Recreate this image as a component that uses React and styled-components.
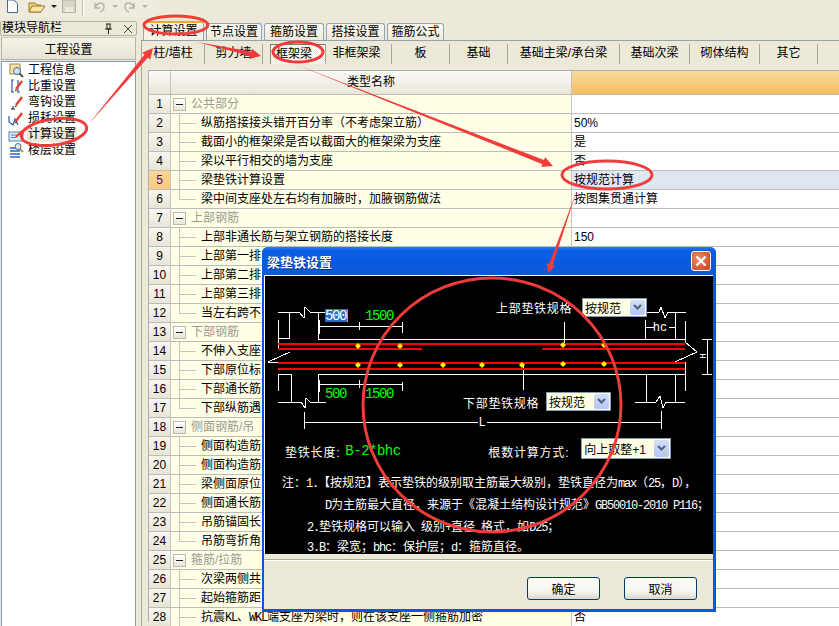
import React from 'react'
import styled, { createGlobalStyle } from 'styled-components'

const FONT = '"Liberation Sans", "Noto Sans CJK SC", sans-serif'
const RED = '#f23c3c'

const GlobalStyle = createGlobalStyle`
  html, body { margin: 0; padding: 0; background: #ece9d8; }
  body { font: 12px ${FONT}; color: #000; }
`

const Page = styled.div`
  position: relative;
  width: 839px;
  height: 626px;
  overflow: hidden;
  background: #ece9d8;
  display: flex;
  flex-direction: column;
`

const Toolbar = styled.div`
  height: 17px;
  flex: none;
  width: 160px;
  display: flex;
  align-items: flex-start;
  background: #efecdf;
  border-bottom-right-radius: 3px;
  padding-left: 6px;
  box-sizing: border-box;
`

const ToolIcon = styled.svg`
  flex: none;
  margin-right: ${({ $gap }) => $gap || 0}px;
`

const Body = styled.div`
  flex: 1;
  min-height: 0;
  display: flex;
  padding-top: 4px;
`

const Side = styled.div`
  width: 138px;
  flex: none;
  display: flex;
  flex-direction: column;
`

const SideHead = styled.div`
  height: 13px;
  margin-right: 1px;
  border: 1px solid #b5b2a4;
  border-radius: 2px;
  display: flex;
  align-items: center;
  padding-left: 1px;
  font-size: 12px;
  line-height: 13px;
`

const SideTitle = styled.span`
  flex: 1;
`

const SideBtn = styled.button`
  height: 23px;
  margin: 1px 2px 0 1px;
  padding: 0;
  border: 1px solid #b8b5a6;
  border-top-color: #cfccbc;
  background: linear-gradient(#f5f3e9, #e6e3d3);
  font: 12px ${FONT};
`

const SideList = styled.div`
  flex: 1;
  margin: 1px 2px 0 1px;
  background: #fff;
  border: 1px solid #7f9db9;
  border-bottom: none;
  display: flex;
  flex-direction: column;
`

const SideItem = styled.div`
  height: 16px;
  display: flex;
  align-items: center;
  padding-left: 6px;
  gap: 2px;
  font-size: 12px;
  line-height: 15px;
`

const SideLabel = styled.span`
  padding: 0 1px;
  background: ${({ $active }) => ($active ? '#eeeadb' : 'transparent')};
`

const Main = styled.div`
  flex: 1;
  min-width: 0;
  display: flex;
  flex-direction: column;
  margin-left: 3px;
`

const TabRow = styled.div`
  height: 19px;
  display: flex;
  align-items: flex-end;
  padding-left: 2px;
  gap: 2px;
  border-bottom: 1px solid #95a0ad;
`

const Tab = styled.div`
  width: ${({ $w }) => $w}px;
  height: ${({ $active }) => ($active ? 19 : 17)}px;
  box-sizing: border-box;
  border: 1px solid #95a4b4;
  border-bottom: none;
  border-top: ${({ $active }) => ($active ? '2px solid #f0a830' : '1px solid #95a4b4')};
  border-radius: 3px 3px 0 0;
  background: ${({ $active }) => ($active ? '#f4f2e6' : 'linear-gradient(#fbfaf5, #ece9d8)')};
  text-align: center;
  line-height: 16px;
  font-size: 12px;
`

const Panel = styled.div`
  flex: 1;
  min-height: 0;
  display: flex;
  flex-direction: column;
  border-left: 1px solid #a9a695;
  padding: 3px 0 0 6px;
`

const CategoryBar = styled.div`
  height: 20px;
  display: flex;
  margin-left: -1px;
`

const Category = styled.div`
  width: ${({ $w }) => $w}px;
  flex: none;
  box-sizing: border-box;
  text-align: center;
  line-height: 19px;
  font-size: 12px;
  white-space: nowrap;
  padding-right: ${({ $pr }) => $pr || 0}px;
  border-right: 1px solid #aca899;
  ${({ $active }) => $active && `
    margin-left: 7px;
    border-left: 1px solid #8d8a7c;
    border-top: 1px solid #7d7a6d;
    background: repeating-conic-gradient(#fff 0 25%, #ece9d8 0 50%) 0 0 / 2px 2px;
  `}
`

const Grid = styled.div`
  margin-top: 6px;
  border-top: 1px solid #a9b0ba;
  border-left: 1px solid #a9b0ba;
  display: grid;
  grid-template-columns: 22px 401px 1fr;
  grid-auto-rows: 19px;
`

const HeadCorner = styled.div`
  grid-row: span 1;
  height: 24px;
  box-sizing: border-box;
  background: linear-gradient(#fbfaf6, #e9e6d8);
  border-right: 1px solid #c4c4c4;
  border-bottom: 1px solid #bcbcbc;
`

const HeadName = styled(HeadCorner)`
  text-align: center;
  line-height: 23px;
`

const HeadValue = styled(HeadCorner)`
  background: linear-gradient(#f9da9e, #f2bd60);
  border-right: none;
`

const RowNum = styled.div`
  box-sizing: border-box;
  margin-top: 5px;
  height: 19px;
  background: ${({ $sel }) => ($sel ? 'linear-gradient(#fdd694, #fbca7c)' : 'linear-gradient(#f8f7ef, #e8e5d6)')};
  color: ${({ $sel }) => ($sel ? '#40108a' : '#000')};
  border-right: 1px solid #c4c4c4;
  border-bottom: 1px solid #bcbcbc;
  text-align: center;
  line-height: 18px;
  font-size: 12px;
`

const NameCell = styled.div`
  position: relative;
  box-sizing: border-box;
  margin-top: 5px;
  height: 19px;
  background: #ffffe6;
  border-right: 1px solid #c4c4c4;
  border-bottom: 1px solid #bcbcbc;
  line-height: 18px;
  padding-left: ${({ $group }) => ($group ? 20 : 30)}px;
  color: ${({ $group }) => ($group ? '#9a9a92' : '#000')};
  font-size: 12px;
  white-space: nowrap;
  overflow: hidden;
  ${({ $group, $last }) => !$group && `
    &::before {
      content: '';
      position: absolute;
      left: 8px;
      top: 0;
      width: 1px;
      height: ${$last ? '10px' : '19px'};
      background: #c3c3c3;
    }
    &::after {
      content: '';
      position: absolute;
      left: 8px;
      top: 9px;
      width: 17px;
      height: 1px;
      background: #c3c3c3;
    }
  `}
`

const Collapse = styled.span`
  position: absolute;
  left: 2px;
  top: 3px;
  width: 11px;
  height: 11px;
  border: 1px solid #b8b8b0;
  background: linear-gradient(#fff, #e8e6da);
  &::after {
    content: '';
    position: absolute;
    left: 2px;
    top: 5px;
    width: 7px;
    height: 1px;
    background: #222;
  }
`

const ValueCell = styled.div`
  box-sizing: border-box;
  margin-top: 5px;
  height: 19px;
  background: ${({ $sel }) => ($sel ? '#dfe7f3' : '#fff')};
  border-bottom: 1px solid #bcbcbc;
  line-height: 18px;
  padding-left: 2px;
  font-size: 12px;
`

const Overlay = styled.svg`
  position: absolute;
  left: 0;
  top: 0;
  pointer-events: none;
  z-index: ${({ $z }) => $z};
`

const Dialog = styled.div`
  position: absolute;
  left: 262px;
  top: 247px;
  width: 454px;
  height: 365px;
  box-sizing: border-box;
  background: #0a55e0;
  border-radius: 6px 6px 0 0;
  padding: 0 3px 3px 2px;
  display: flex;
  flex-direction: column;
  z-index: 5;
`

const TitleBar = styled.div`
  height: 28px;
  flex: none;
  margin: 0 -3px 0 -2px;
  padding: 0 5px 0 5px;
  border-radius: 6px 6px 0 0;
  background: linear-gradient(#2a7bf0 0, #0b5fe4 12%, #0a58dc 70%, #0b5bd8 100%);
  display: flex;
  align-items: center;
  justify-content: space-between;
  color: #fff;
  font-weight: bold;
  font-size: 13px;
  text-shadow: 1px 1px 0 #0a2f8c;
`

const CloseBtn = styled.div`
  width: 20px;
  height: 20px;
  box-sizing: border-box;
  border: 1px solid #fff;
  border-radius: 3px;
  background: radial-gradient(circle at 35% 35%, #ee8a66, #c9401c);
  display: flex;
  align-items: center;
  justify-content: center;
`

const DialogBlack = styled.div`
  height: 279px;
  flex: none;
  background: #000;
  border-top: 1px solid #fff;
  border-left: 1px solid #fff;
  box-sizing: border-box;
  display: flex;
  flex-direction: column;
  color: #fff;
`

const Drawing = styled.div`
  position: relative;
  height: 164px;
  flex: none;
`

const DimText = styled.span`
  position: absolute;
  left: ${({ $x }) => $x}px;
  top: ${({ $y }) => $y}px;
  font: 14px/14px "Liberation Mono", monospace;
  color: #00ff00;
  letter-spacing: -1.4px;
  ${({ $sel }) => $sel && `
    color: #fff;
    background: #316ac5;
    border-right: 1px solid #e0a040;
    height: 13px;
    padding-right: 1px;
  `}
`

const DrawLabel = styled.span`
  position: absolute;
  left: ${({ $x }) => $x}px;
  top: ${({ $y }) => $y}px;
  font-size: 12px;
  line-height: 14px;
  letter-spacing: 0.7px;
  white-space: nowrap;
`

const Combo = styled.div`
  position: ${({ $flow }) => ($flow ? 'static' : 'absolute')};
  left: ${({ $x }) => $x}px;
  top: ${({ $y }) => $y}px;
  width: ${({ $w }) => $w}px;
  height: ${({ $h }) => $h || 20}px;
  align-self: flex-start;
  box-sizing: border-box;
  border: 1px solid #7f9db9;
  background: #ffffe6;
  color: #000;
  display: flex;
  align-items: center;
  padding-left: 2px;
  font-size: 12px;
  flex: none;
`

const ComboText = styled.span`
  flex: 1;
  white-space: nowrap;
`

const ComboArrow = styled.span`
  width: 15px;
  align-self: stretch;
  margin: 1px;
  background: linear-gradient(#d3def8, #b4c6f0);
  border-radius: 2px;
  display: flex;
  align-items: center;
  justify-content: center;
`

const FormulaRow = styled.div`
  height: 26px;
  flex: none;
  margin-top: -2px;
  display: flex;
  align-items: center;
  padding-left: 20px;
`

const FormulaLabel = styled.span`
  font-size: 12px;
  letter-spacing: 0.8px;
  margin-right: ${({ $gap }) => $gap || 0}px;
`

const Formula = styled.span`
  color: #00ff00;
  font: 14px "Liberation Mono", monospace;
  letter-spacing: -0.5px;
  width: 143px;
`

const Notes = styled.div`
  margin-top: 12px;
  display: flex;
  flex-direction: column;
  font-size: 12px;
  line-height: 14px;
`

const NoteLine = styled.div`
  height: ${({ $h }) => $h || 22}px;
  padding-left: ${({ $pad }) => $pad}px;
  white-space: nowrap;
`

// half-width latin, 6px a character like the bitmap font of the original
const Mono = styled.span`
  font: 12px "Liberation Mono", monospace;
  letter-spacing: -1.2px;
`

const DialogFoot = styled.div`
  flex: 1;
  background: #ece9d8;
  display: flex;
  flex-direction: column;
`

const FootRule = styled.div`
  margin-top: 5px;
  height: 1px;
  background: #aca899;
  border-bottom: 1px solid #fff;
`

const FootBtns = styled.div`
  margin-top: 16px;
  padding-left: 263px;
  display: flex;
  gap: 24px;
`

const XpButton = styled.button`
  width: 73px;
  height: 23px;
  padding: 0;
  border: 1px solid #003c74;
  border-radius: 3px;
  background: linear-gradient(#fff, #f3f2ea 70%, #dcd8c8);
  font: 12px ${FONT};
`

const ROWS = [
  { n: '公共部分', group: true },
  { n: '纵筋搭接接头错开百分率\uFF08不考虑架立筋\uFF09', v: '50%' },
  { n: '截面小的框架梁是否以截面大的框架梁为支座', v: '是' },
  { n: '梁以平行相交的墙为支座', v: '否' },
  { n: '梁垫铁计算设置', v: '按规范计算', sel: true },
  { n: '梁中间支座处左右均有加腋时\uFF0C加腋钢筋做法', v: '按图集贯通计算', last: true },
  { n: '上部钢筋', group: true },
  { n: '上部非通长筋与架立钢筋的搭接长度', v: '150' },
  { n: '上部第一排' },
  { n: '上部第二排' },
  { n: '上部第三排' },
  { n: '当左右跨不', last: true },
  { n: '下部钢筋', group: true },
  { n: '不伸入支座' },
  { n: '下部原位标' },
  { n: '下部通长筋' },
  { n: '下部纵筋遇', last: true },
  { n: '侧面钢筋/吊', group: true },
  { n: '侧面构造筋' },
  { n: '侧面构造筋' },
  { n: '梁侧面原位' },
  { n: '侧面通长筋' },
  { n: '吊筋锚固长' },
  { n: '吊筋弯折角', last: true },
  { n: '箍筋/拉筋', group: true },
  { n: '次梁两侧共' },
  { n: '起始箍筋距' },
  { n: <>抗震<Mono>KL</Mono>、<Mono>WKL</Mono>端支座为梁时&#xFF0C;则在该支座一侧箍筋加密</>, v: '否' },
]

const TABS = [
  ['计算设置', 61, true],
  ['节点设置', 56],
  ['箍筋设置', 60],
  ['搭接设置', 59],
  ['箍筋公式', 57],
]

const CATEGORIES = [
  { label: '柱/墙柱', w: 58, pr: 5 },
  { label: '剪力墙', w: 58 },
  { label: '框架梁', w: 56, pr: 8, active: true },
  { label: '非框架梁', w: 66, pr: 4 },
  { label: '板', w: 58 },
  { label: '基础', w: 58 },
  { label: '基础主梁/承台梁', w: 112 },
  { label: '基础次梁', w: 70 },
  { label: '砌体结构', w: 70 },
  { label: '其它', w: 58 },
]

const SIDE_ITEMS = [
  ['工程信息', 'info'],
  ['比重设置', 'weight'],
  ['弯钩设置', 'hook'],
  ['损耗设置', 'loss'],
  ['计算设置', 'calc'],
  ['楼层设置', 'floor'],
]

const Pencil = () => (
  <>
    <path d="M8 11 L14 3" stroke="#e8402c" strokeWidth="2.4" />
    <path d="M8 11 l-1.5 2.5 2.5-1" fill="#333" />
  </>
)

const SideIcon = ({ kind }) => (
  <svg width="17" height="16" viewBox="0 0 17 16">
    {kind === 'info' && (
      <>
        <rect x="2" y="2" width="10" height="10" fill="#f6e6a8" stroke="#a08a40" />
        <circle cx="9" cy="9" r="3.5" fill="#cfe2f4" stroke="#55697e" />
        <path d="M11.5 11.5 L15 15" stroke="#55504a" strokeWidth="2" />
      </>
    )}
    {kind === 'weight' && (
      <>
        <path d="M3 2 H6 M3 14 H6 M4 2 V14 M10 2 V14 M9 14 H12" stroke="#2a5aa8" strokeWidth="1.2" fill="none" />
        <Pencil />
      </>
    )}
    {kind === 'hook' && (
      <>
        <path d="M5 12 V15 M3 15 H7" stroke="#222" fill="none" />
        <Pencil />
      </>
    )}
    {kind === 'loss' && (
      <>
        <path d="M1 6 V12 L5 15 L7 9 L10 15" stroke="#2a5aa8" strokeWidth="1.2" fill="none" />
        <Pencil />
      </>
    )}
    {kind === 'calc' && (
      <>
        <rect x="1" y="6" width="14" height="9" fill="#dfeaf6" stroke="#5a84b8" />
        <path d="M3 9 H9 M3 11.5 H8" stroke="#5a84b8" />
        <path d="M8 11 L14 5" stroke="#e8402c" strokeWidth="2.2" />
      </>
    )}
    {kind === 'floor' && (
      <>
        <path d="M2 6 H12 M2 9 H12 M2 12 H12 M2 15 H12" stroke="#2a62c0" strokeWidth="1.6" />
        <circle cx="10" cy="4.5" r="3" fill="#dce8f4" stroke="#55697e" />
        <path d="M12 7 L15 10" stroke="#8a7a50" strokeWidth="1.6" />
      </>
    )}
  </svg>
)

const DownChevron = () => (
  <svg width="9" height="7" viewBox="0 0 9 7">
    <path d="M1 1 L4.5 4.5 L8 1" stroke="#4d6185" strokeWidth="2" fill="none" />
  </svg>
)

// tapered hand-drawn arrow, thin at the tail and thick at the head
const arrowPoints = (x1, y1, x2, y2, head) => {
  const len = Math.hypot(x2 - x1, y2 - y1)
  const ux = (x2 - x1) / len
  const uy = (y2 - y1) / len
  const nx = -uy
  const ny = ux
  const bx = x2 - ux * head * 1.5
  const by = y2 - uy * head * 1.5
  const pts = [
    [x1, y1],
    [bx + (nx * head) / 3.2, by + (ny * head) / 3.2],
    [bx + nx * head * 0.75, by + ny * head * 0.75],
    [x2, y2],
    [bx - nx * head * 0.75, by - ny * head * 0.75],
    [bx - (nx * head) / 3.2, by - (ny * head) / 3.2],
  ]
  return pts.map((p) => p.join(',')).join(' ')
}

const Arrow = ({ from, to, head = 8 }) => (
  <polygon points={arrowPoints(from[0], from[1], to[0], to[1], head)} fill={RED} />
)

const WHITE_LINES = [
  'M277 312 H298 L303 318 L304 307 L309 312 H325',
  'M288 312 V338 H277',
  'M277 320 V350',
  'M317 312 V339 H684',
  'M318 326 H401 M318 320 V334 M358 322 V330 M401 322 V333',
  'M289 352 L267 362 H277',
  'M277 362 V363',
  'M317 402 V374 H684',
  'M277 374 H290 V402',
  'M277 374 V391',
  'M277 402 H300 L304 408 L305 398 L309 402 H325',
  'M318 384 H401 M318 380 V392 M358 380 V388 M401 382 V391',
  'M303 422 H477 M486 422 H660 M303 412 V429 M660 411 V429',
  'M646 312 H658 L660 307 L664 318 L667 312 H685',
  'M644 320 V339 M674 312 V339',
  'M644 327 H653 M668 327 H674',
  'M684 321 V342 L696 352 L674 362 H684 V391',
  'M563 322 V345 M522 365 V390',
  'M706 339 V374 M701 339 H711 M701 374 H711',
  'M645 374 V402 M674 374 V402',
  'M634 402 H655 L659 396 L662 408 L665 402 H684',
]

const RED_LINES = [
  'M277 344 H684',
  'M277 349 H421 M541 349 H684',
  'M277 363 H684',
  'M277 369 H684',
]

const DOTS = [
  [357, 346], [399, 346], [562, 345], [603, 345],
  [357, 365], [399, 365], [442, 365], [481, 365], [521, 365], [562, 364], [603, 364],
]

const BeamDrawing = () => (
  <Overlay as="svg" $z={0} width="449" height="164" viewBox="264 276 449 164">
    <path d={WHITE_LINES.join(' ')} stroke="#fff" fill="none" shapeRendering="crispEdges" />
    <path d={RED_LINES.join(' ')} stroke="#ff0000" strokeWidth="2" fill="none" shapeRendering="crispEdges" />
    {DOTS.map(([x, y]) => (
      <path key={`${x}-${y}`} d={`M${x} ${y - 3} L${x + 3} ${y} L${x} ${y + 3} L${x - 3} ${y} Z`} fill="#ffff00" />
    ))}
    <text x="481" y="426" fill="#fff" fontSize="12" fontFamily="Liberation Mono, monospace" textAnchor="middle">L</text>
    <text x="659" y="331" fill="#fff" fontSize="12" fontFamily="Liberation Mono, monospace" textAnchor="middle">hc</text>
    <text x="0" y="0" fill="#fff" fontSize="9" fontFamily="Liberation Mono, monospace" textAnchor="middle" transform="translate(705 356) rotate(-90)">H</text>
  </Overlay>
)

const BeamDialog = () => (
  <Dialog>
    <TitleBar>
      梁垫铁设置
      <CloseBtn>
        <svg width="12" height="12" viewBox="0 0 12 12">
          <path d="M1.5 1.5 L10.5 10.5 M10.5 1.5 L1.5 10.5" stroke="#fff" strokeWidth="2.4" />
        </svg>
      </CloseBtn>
    </TitleBar>
    <DialogBlack>
      <Drawing>
        <BeamDrawing />
        <DimText $x={60} $y={33} $sel>500</DimText>
        <DimText $x={100} $y={33}>1500</DimText>
        <DimText $x={60} $y={111}>500</DimText>
        <DimText $x={100} $y={111}>1500</DimText>
        <DrawLabel $x={231} $y={26}>上部垫铁规格</DrawLabel>
        <Combo $x={317} $y={22} $w={65} $h={19}>
          <ComboText>按规范</ComboText>
          <ComboArrow><DownChevron /></ComboArrow>
        </Combo>
        <DrawLabel $x={198} $y={121}>下部垫铁规格</DrawLabel>
        <Combo $x={281} $y={116} $w={65} $h={19}>
          <ComboText>按规范</ComboText>
          <ComboArrow><DownChevron /></ComboArrow>
        </Combo>
      </Drawing>
      <FormulaRow>
        <FormulaLabel $gap={5}>垫铁长度:</FormulaLabel>
        <Formula>B-2*bhc</Formula>
        <FormulaLabel $gap={12}>根数计算方式:</FormulaLabel>
        <Combo $flow $w={90} $h={21}>
          <ComboText>向上取整+1</ComboText>
          <ComboArrow><DownChevron /></ComboArrow>
        </Combo>
      </FormulaRow>
      <Notes>
        <NoteLine $pad={17}>注&#xFF1A;<Mono>1.</Mono>【按规范】表示垫铁的级别取主筋最大级别&#xFF0C;垫铁直径为<Mono>max</Mono>&#xFF08;<Mono>25</Mono>&#xFF0C;<Mono>D</Mono>&#xFF09;&#xFF0C;</NoteLine>
        <NoteLine $pad={60}><Mono>D</Mono>为主筋最大直径&#xFF0C;来源于《混凝土结构设计规范》<Mono>GB50010-2010 P116</Mono>&#xFF1B;</NoteLine>
        <NoteLine $pad={42} $h={20}><Mono>2.</Mono>垫铁规格可以输入<Mono> </Mono>级别<Mono>+</Mono>直径<Mono> </Mono>格式&#xFF0C;如<Mono>D25</Mono>&#xFF1B;</NoteLine>
        <NoteLine $pad={42} $h={14}><Mono>3.B</Mono>&#xFF1A;梁宽&#xFF1B;<Mono>bhc</Mono>&#xFF1A;保护层&#xFF1B;<Mono>d</Mono>&#xFF1A;箍筋直径。</NoteLine>
      </Notes>
    </DialogBlack>
    <DialogFoot>
      <FootRule />
      <FootBtns>
        <XpButton>确定</XpButton>
        <XpButton>取消</XpButton>
      </FootBtns>
    </DialogFoot>
  </Dialog>
)

const Annotations = () => (
  <Overlay $z={6} width="839" height="626" viewBox="0 0 839 626">
    <g fill="none" stroke={RED} strokeWidth="3">
      <ellipse cx="176" cy="25" rx="32" ry="9" />
      <ellipse cx="298" cy="52" rx="25" ry="10" />
      <ellipse cx="54" cy="132" rx="33" ry="13" transform="rotate(-8 54 132)" />
      <ellipse cx="607" cy="175" rx="45" ry="14" />
      <ellipse cx="492" cy="405" rx="129" ry="127" />
    </g>
    <Arrow from={[88, 125]} to={[153, 48]} head={7} />
    <Arrow from={[197, 42]} to={[261, 56]} head={7} />
    <Arrow from={[297, 65]} to={[553, 166]} head={7} />
    <Arrow from={[577, 190]} to={[548, 273]} head={6} />
  </Overlay>
)

const App = () => (
  <Page>
    <GlobalStyle />
    <Toolbar>
      <ToolIcon $gap={9} width="13" height="13" viewBox="0 0 13 13">
        <path d="M1.5 0 H8 L11.5 3.5 V12.5 H1.5 Z" fill="#fff" stroke="#4a6a90" />
      </ToolIcon>
      <ToolIcon $gap={5} width="18" height="13" viewBox="0 0 18 13">
        <path d="M1 12 V3 H7 L9 5 H13 V12 Z" fill="#f2d37a" stroke="#9a7a28" />
        <path d="M1 12 L4 6 H17 L13 12 Z" fill="#f9e6a6" stroke="#9a7a28" />
      </ToolIcon>
      <ToolIcon $gap={5} width="6" height="13" viewBox="0 0 6 13">
        <path d="M0 5 H6 L3 8 Z" fill="#222" />
      </ToolIcon>
      <ToolIcon $gap={6} width="14" height="13" viewBox="0 0 14 13">
        <path d="M.5 0 H13.5 V12.5 H.5 Z" fill="#d8d5c6" stroke="#b4b1a3" />
        <rect x="3" y="7" width="8" height="5" fill="#efecdf" />
      </ToolIcon>
      <ToolIcon $gap={8} width="2" height="16" viewBox="0 0 2 16">
        <path d="M.5 0 V16" stroke="#c2bfb0" />
        <path d="M1.5 0 V16" stroke="#fff" />
      </ToolIcon>
      <ToolIcon $gap={4} width="26" height="13" viewBox="0 0 26 13">
        <path d="M3 3 V8 H8 M3 8 C6 1 12 2 12 7 C12 10 10 11 8 12" stroke="#b8b5a8" strokeWidth="1.5" fill="none" />
        <path d="M20 5 H26 L23 8 Z" fill="#b8b5a8" />
      </ToolIcon>
      <ToolIcon $gap={4} width="26" height="13" viewBox="0 0 26 13">
        <path d="M12 3 V8 H7 M12 8 C9 1 3 2 3 7 C3 10 5 11 7 12" stroke="#b8b5a8" strokeWidth="1.5" fill="none" />
        <path d="M20 5 H26 L23 8 Z" fill="#b8b5a8" />
      </ToolIcon>
    </Toolbar>
    <Body>
      <Side>
        <SideHead>
          <SideTitle>模块导航栏</SideTitle>
          <svg width="20" height="12" viewBox="0 0 20 12">
            <path d="M3 1 H8 M4 1 V6 H7 V1 M2 6 H9 M5.5 6 V11" stroke="#222" fill="none" />
          </svg>
          <svg width="10" height="10" viewBox="0 0 10 10" style={{ marginRight: 3 }}>
            <path d="M1 1 L9 9 M9 1 L1 9" stroke="#444" />
          </svg>
        </SideHead>
        <SideBtn>工程设置</SideBtn>
        <SideList>
          {SIDE_ITEMS.map(([label, kind]) => (
            <SideItem key={kind}>
              <SideIcon kind={kind} />
              <SideLabel $active={kind === 'calc'}>{label}</SideLabel>
            </SideItem>
          ))}
        </SideList>
      </Side>
      <Main>
        <TabRow>
          {TABS.map(([label, w, active]) => (
            <Tab key={label} $w={w} $active={active}>{label}</Tab>
          ))}
        </TabRow>
        <Panel>
          <CategoryBar>
            {CATEGORIES.map(({ label, w, pr, active }) => (
              <Category key={label} $w={w} $pr={pr} $active={active}>{label}</Category>
            ))}
          </CategoryBar>
          <Grid>
            <HeadCorner />
            <HeadName>类型名称</HeadName>
            <HeadValue />
            {ROWS.map((row, i) => (
              <React.Fragment key={i}>
                <RowNum $sel={row.sel}>{i + 1}</RowNum>
                <NameCell $group={row.group} $last={row.last}>
                  {row.group && <Collapse />}
                  {row.n}
                </NameCell>
                <ValueCell $sel={row.sel}>{row.v}</ValueCell>
              </React.Fragment>
            ))}
          </Grid>
        </Panel>
      </Main>
    </Body>
    <BeamDialog />
    <Annotations />
  </Page>
)

export default App
